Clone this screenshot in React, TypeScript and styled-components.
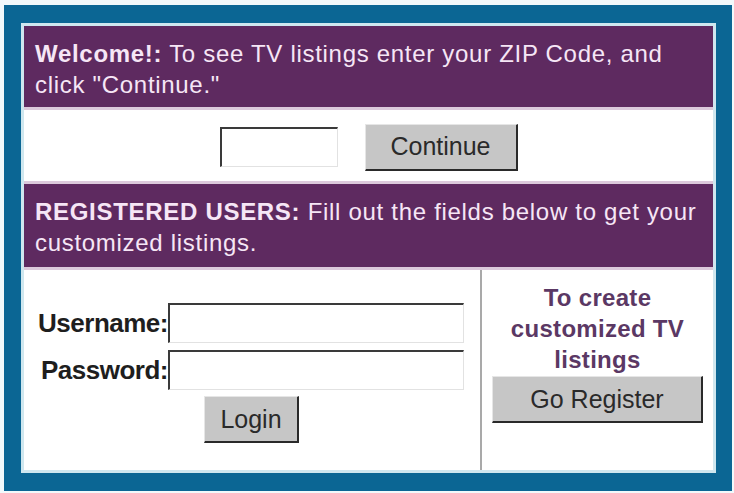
import React from 'react';
import styled, { createGlobalStyle } from 'styled-components';

const colors = {
  page: '#f2f9fb',
  frame: '#0b6694',
  edge: '#cfe7ef',
  purple: '#5e2a60',
  rule: '#dcc9dc',
  headText: '#f6e6f6',
  promo: '#5b3864',
  button: '#c6c6c6',
};

const font = `"Liberation Sans", Arial, sans-serif`;

const GlobalStyle = createGlobalStyle`
  html, body {
    margin: 0;
    padding: 0;
    background: ${colors.page};
    font-family: ${font};
  }
`;

const Frame = styled.div`
  width: 728px;
  height: 486px;
  margin: 5px 0 0 4px;
  box-sizing: border-box;
  background: ${colors.frame};
  padding: 18px 16px 18px 17px;
`;

const Panel = styled.div`
  height: 100%;
  box-sizing: border-box;
  border: 3px solid ${colors.edge};
  background: ${colors.rule};
  display: grid;
  grid-template-rows: 81px 71px 83px 1fr;
  row-gap: 3px;
`;

const Banner = styled.div`
  background: ${colors.purple};
  color: ${colors.headText};
  font-size: 24px;
  letter-spacing: 0.7px;
  line-height: 31px;
  padding: 12px 6px 0 11px;

  b {
    font-weight: bold;
  }
`;

const ZipRow = styled.div`
  background: #fff;
  display: flex;
  align-items: center;
  justify-content: center;
  gap: 27px;
  padding-top: 3px;
`;

const TextBox = styled.input<{ $w: number }>`
  width: ${(p) => p.$w}px;
  height: 40px;
  box-sizing: border-box;
  margin: 0;
  padding: 0 4px;
  background: #fff;
  border-style: solid;
  border-width: 2px 1px 1px 2px;
  border-color: #3a3a3a #e2e2e2 #e2e2e2 #3a3a3a;
  font-family: ${font};
  font-size: 20px;
  outline: none;
`;

const Button = styled.button<{ $w: number }>`
  width: ${(p) => p.$w}px;
  height: 47px;
  box-sizing: border-box;
  margin: 0;
  padding: 0;
  background: ${colors.button};
  border-style: solid;
  border-width: 1px 2px 2px 1px;
  border-color: #e6e6e6 #2a2a2a #2a2a2a #e6e6e6;
  color: #2a2a2a;
  font-family: ${font};
  font-size: 25px;
  cursor: pointer;
`;

const Bottom = styled.div`
  background: #fff;
  display: grid;
  grid-template-columns: 456px 2px 1fr;
`;

const Divider = styled.div`
  background: #a9a9a9;
`;

const LoginForm = styled.div`
  display: flex;
  flex-direction: column;
  align-items: flex-start;
  padding: 33px 0 0 9px;
`;

const Field = styled.label`
  display: grid;
  grid-template-columns: 135px auto;
  align-items: center;
  margin-bottom: 7px;
`;

const Label = styled.span`
  justify-self: end;
  font-size: 26px;
  font-weight: bold;
  letter-spacing: -0.5px;
  color: #1e1e1e;
`;

const LoginWrap = styled.div`
  padding-left: 171px;
  margin-top: -1px;
`;

const Promo = styled.div`
  display: flex;
  flex-direction: column;
  align-items: center;
  padding-top: 12px;
`;

const PromoText = styled.div`
  color: ${colors.promo};
  font-size: 24px;
  font-weight: bold;
  line-height: 31px;
  letter-spacing: 0.3px;
  text-align: center;
  margin-bottom: 1px;
`;

export default function App() {
  return (
    <>
      <GlobalStyle />
      <Frame>
        <Panel>
          <Banner>
            <b>Welcome!:</b> To see TV listings enter your ZIP Code, and click "Continue."
          </Banner>
          <ZipRow>
            <TextBox $w={118} aria-label="ZIP Code" />
            <Button $w={153}>Continue</Button>
          </ZipRow>
          <Banner>
            <b>REGISTERED USERS:</b> Fill out the fields below to get your customized listings.
          </Banner>
          <Bottom>
            <LoginForm>
              <Field>
                <Label>Username:</Label>
                <TextBox $w={296} />
              </Field>
              <Field>
                <Label>Password:</Label>
                <TextBox $w={296} type="password" />
              </Field>
              <LoginWrap>
                <Button $w={95}>Login</Button>
              </LoginWrap>
            </LoginForm>
            <Divider />
            <Promo>
              <PromoText>
                To create
                <br />
                customized TV
                <br />
                listings
              </PromoText>
              <Button $w={211}>Go Register</Button>
            </Promo>
          </Bottom>
        </Panel>
      </Frame>
    </>
  );
}
